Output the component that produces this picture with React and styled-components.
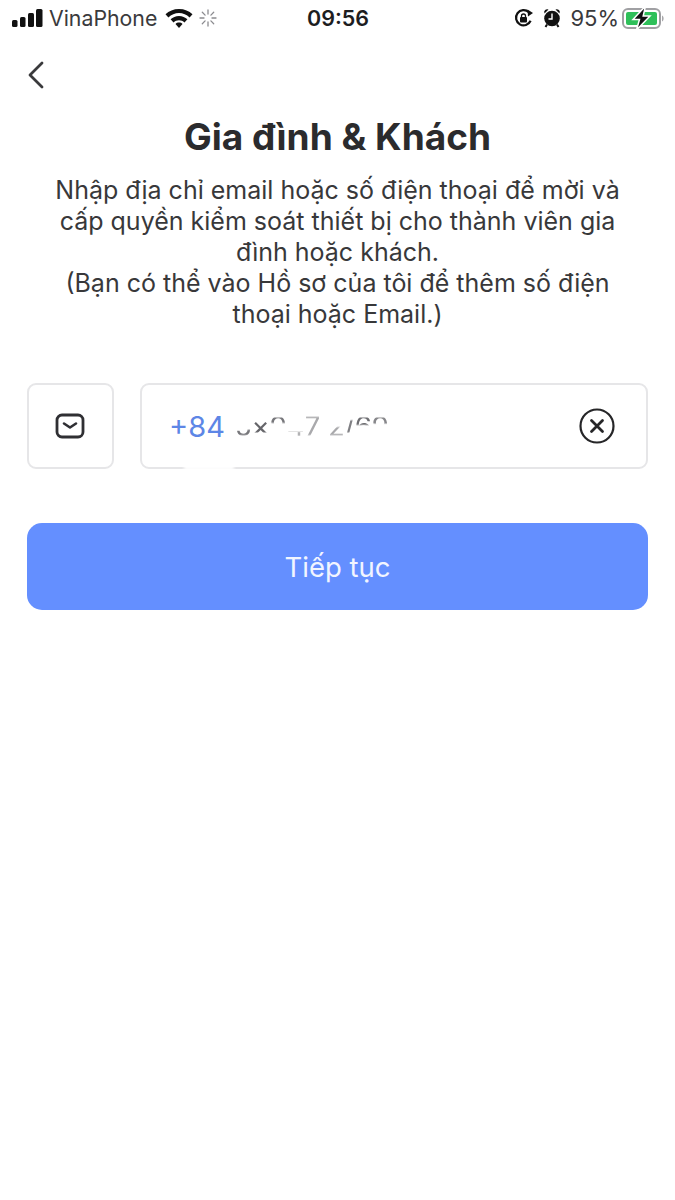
import React from 'react';
import styled, { createGlobalStyle } from 'styled-components';

const Global = createGlobalStyle`
  html, body { margin: 0; padding: 0; background: #fff; }
  body { font-family: Inter, "Noto Sans", sans-serif; color: #2b2b2d; }
`;

const Page = styled.div`
  width: 675px;
  height: 1200px;
  overflow: hidden;
  background: #fff;
`;

const StatusBar = styled.div`
  height: 37px;
  box-sizing: border-box;
  padding: 0 10px 2px 11px;
  display: grid;
  grid-template-columns: 1fr auto 1fr;
  align-items: center;
  font-size: 21.3px;
  color: #1d1d1f;
`;

const StatusLeft = styled.div`
  display: flex;
  align-items: center;
  gap: 6px;
`;

const StatusRight = styled.div`
  display: flex;
  align-items: center;
  justify-content: flex-end;
  gap: 9px;
`;

const Carrier = styled.span`
  color: #3a3a3c;
  margin-right: 2px;
`;

const Clock = styled.span`
  font-weight: 600;
  font-size: 21.5px;
`;

const Percent = styled.span`
  color: #3a3a3c;
  font-size: 22px;
  margin-right: -7px;
`;

const BackRow = styled.div`
  padding: 24px 0 0 27px;
  height: 35px;
`;

const Title = styled.h1`
  margin: 19px 0 0;
  text-align: center;
  font-size: 37px;
  line-height: 44px;
  font-weight: 700;
  color: #2b2b2d;
`;

const Description = styled.p`
  margin: 16px 40px 0;
  text-align: center;
  font-size: 25px;
  line-height: 31px;
  color: #38383a;
`;

const Form = styled.div`
  margin-top: 53px;
  padding: 0 27px;
  display: flex;
  flex-direction: column;
  gap: 54px;
`;

const InputRow = styled.div`
  display: flex;
  gap: 26px;
`;

const Box = styled.div`
  height: 86px;
  box-sizing: border-box;
  border: 2px solid #e6e6e8;
  border-radius: 9px;
  display: flex;
  align-items: center;
`;

const TypeBox = styled(Box)`
  width: 87px;
  flex: none;
  justify-content: center;
  padding-right: 2px;
`;

const PhoneBox = styled(Box)`
  flex: 1;
  position: relative;
  padding: 0 31px 0 27px;
  justify-content: space-between;
`;

const BorderSmear = styled.div`
  position: absolute;
  left: 42px;
  bottom: -3px;
  width: 50px;
  height: 5px;
  background: #fff;
  filter: blur(1.5px);
`;

const Phone = styled.div`
  display: flex;
  align-items: center;
  gap: 10px;
  font-size: 29px;
`;

const Prefix = styled.span`
  color: #5d86e6;
`;

const Masked = styled.span`
  display: flex;
  color: #55555a;
  font-size: 27.5px;
  white-space: pre;
  filter: blur(0.6px);
`;

const Glyph = styled.span`
  mask-image: linear-gradient(
    to bottom,
    transparent ${p => p.$from}%,
    #000 ${p => p.$from + 6}%,
    #000 ${p => p.$to - 6}%,
    transparent ${p => p.$to}%
  );
  opacity: ${p => p.$fade};
`;

const Submit = styled.button`
  height: 87px;
  border: 0;
  border-radius: 15px;
  background: #648fff;
  color: #f2f5ff;
  font-family: inherit;
  font-size: 27.5px;
`;

// top and bottom of the slice of each digit that is left after the retouching
const maskedGlyphs = [
  { c: '5', from: 58, to: 80, fade: 0.8 },
  { c: '×', from: 30, to: 72, fade: 0.9 },
  { c: '9', from: 22, to: 44, fade: 0.8 },
  { c: '4', from: 64, to: 82, fade: 0.45 },
  { c: '7', from: 20, to: 80, fade: 0.5 },
  { c: ' ', from: 0, to: 100, fade: 1 },
  { c: '2', from: 50, to: 80, fade: 0.5 },
  { c: '/', from: 30, to: 72, fade: 0.75 },
  { c: '6', from: 22, to: 50, fade: 0.85 },
  { c: '9', from: 22, to: 46, fade: 0.7 },
];

const Signal = () => (
  <svg width="32" height="20" viewBox="0 0 32 20" fill="#111">
    <rect x="1" y="12" width="5.500" height="7" rx="1.500" />
    <rect x="9" y="9" width="5.500" height="10" rx="1.500" />
    <rect x="17" y="5" width="6" height="14" rx="1.500" />
    <rect x="25" y="1" width="6.500" height="18" rx="1.500" />
  </svg>
);

const Wifi = () => (
  <svg width="28" height="20" viewBox="0 0 28 20" fill="#111">
    <path d="M14 1C8.500 1 4 3 .5 6.300L3.400 9.400C6.300 6.700 10 5.100 14 5.100s7.700 1.600 10.600 4.300l2.900-3.100C24 3 19.500 1 14 1z" />
    <path d="M14 8c-3.300 0-6.200 1.300-8.400 3.300l2.900 3.100c1.500-1.400 3.400-2.200 5.500-2.200s4 .8 5.500 2.200l2.900-3.100C20.200 9.300 17.300 8 14 8z" />
    <path d="M14 14.600c-1.400 0-2.600.5-3.500 1.400L14 20l3.500-4c-.9-.9-2.100-1.400-3.500-1.400z" />
  </svg>
);

const Spinner = () => (
  <svg width="18" height="18" viewBox="0 0 18 18" stroke="#8c8c90" strokeWidth="1.300" strokeLinecap="round">
    <path d="M9 1v4M9 13v4M1 9h4M13 9h4M3.300 3.300l2.800 2.800M11.900 11.900l2.800 2.800M3.300 14.700l2.800-2.800M11.900 6.100l2.800-2.800" />
  </svg>
);

const RotationLock = () => (
  <svg width="20" height="20" viewBox="0 0 20 20" fill="none" stroke="#111">
    <path d="M16.600 12.800A7.600 7.600 0 1 1 14.800 4.200" strokeWidth="2.200" />
    <path d="M13.500 1.500l5.500 3.500-5 3.500z" fill="#111" stroke="none" />
    <rect x="6" y="9" width="7" height="5.500" rx="1" fill="#111" stroke="none" />
    <path d="M7.500 9.500V8a2 2 0 0 1 4 0v1.500" strokeWidth="1.300" />
  </svg>
);

const Alarm = () => (
  <svg width="18" height="21" viewBox="0 0 18 21">
    <circle cx="9" cy="11.500" r="7.800" fill="#111" />
    <path d="M1.500 6.500a3 3 0 0 1 4-4zM16.500 6.500a3 3 0 0 0-4-4z" fill="#111" />
    <path d="M4 17.500L2.500 20M14 17.500l1.500 2.500" stroke="#111" strokeWidth="2" />
    <path d="M9 6.500V12H5.500" stroke="#fff" strokeWidth="1.400" fill="none" />
  </svg>
);

const Battery = () => (
  <svg width="44" height="26" viewBox="0 0 44 26">
    <rect x="2" y="4" width="37" height="19" rx="5" fill="none" stroke="#a0a0a3" strokeWidth="2" />
    <rect x="5" y="7" width="31" height="13" rx="2" fill="#2fc05a" />
    <path d="M41 10.500v6c1.200-.5 1.600-1.700 1.600-3s-.4-2.500-1.600-3z" fill="#a8a8ab" />
    <path d="M24.500 1L12 14.500h6.500L15.500 25 29 11h-6.800z" fill="#111" stroke="#fff" strokeWidth="1.500" />
  </svg>
);

const BackIcon = () => (
  <svg width="18" height="28" viewBox="0 0 18 28" fill="none" stroke="#3a3a3c" strokeWidth="2.800" strokeLinecap="round" strokeLinejoin="round">
    <path d="M15 2L3 14l12 12" />
  </svg>
);

const MailIcon = () => (
  <svg width="30" height="26" viewBox="0 0 30 26" fill="none" stroke="#2f2f33">
    <rect x="2" y="2" width="26" height="22" rx="5" strokeWidth="2.800" />
    <path d="M9 10.500l6 4 6-4" strokeWidth="2.600" strokeLinecap="round" strokeLinejoin="round" />
  </svg>
);

const ClearIcon = () => (
  <svg width="36" height="36" viewBox="0 0 36 36" fill="none" stroke="#262628" strokeLinecap="round">
    <circle cx="18" cy="18" r="16.500" strokeWidth="2.200" />
    <path d="M12.500 12.500l11 11M23.500 12.500l-11 11" strokeWidth="2.800" />
  </svg>
);

export default function App() {
  return (
    <Page>
      <Global />
      <StatusBar>
        <StatusLeft>
          <Signal />
          <Carrier>VinaPhone</Carrier>
          <Wifi />
          <Spinner />
        </StatusLeft>
        <Clock>09:56</Clock>
        <StatusRight>
          <RotationLock />
          <Alarm />
          <Percent>95%</Percent>
          <Battery />
        </StatusRight>
      </StatusBar>
      <BackRow>
        <BackIcon />
      </BackRow>
      <Title>Gia đình &amp; Khách</Title>
      <Description>
        Nhập địa chỉ email hoặc số điện thoại để mời và cấp quyền kiểm soát thiết bị cho thành viên gia đình hoặc khách.
        <br />
        (Bạn có thể vào Hồ sơ của tôi để thêm số điện thoại hoặc Email.)
      </Description>
      <Form>
        <InputRow>
          <TypeBox>
            <MailIcon />
          </TypeBox>
          <PhoneBox>
            <Phone>
              <Prefix>+84</Prefix>
              <Masked>
                {maskedGlyphs.map((g, i) => (
                  <Glyph key={i} $from={g.from} $to={g.to} $fade={g.fade}>{g.c}</Glyph>
                ))}
              </Masked>
            </Phone>
            <ClearIcon />
            <BorderSmear />
          </PhoneBox>
        </InputRow>
        <Submit>Tiếp tục</Submit>
      </Form>
    </Page>
  );
}
